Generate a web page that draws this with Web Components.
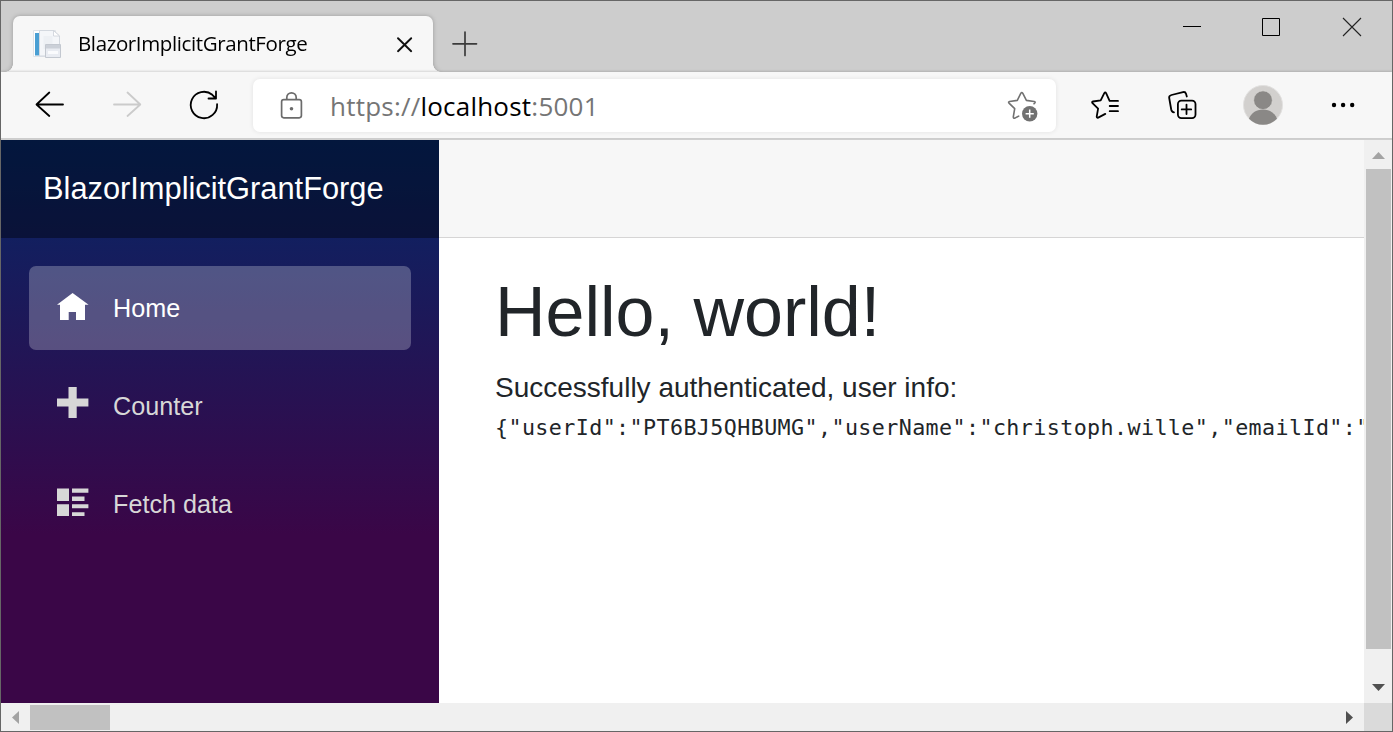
<!DOCTYPE html>
<html lang="en">
<head>
<meta charset="utf-8">
<title>BlazorImplicitGrantForge</title>
<style>
html,body{margin:0;height:100%;overflow:hidden}
body{font-family:"Liberation Sans",Arial,sans-serif}
</style>
</head>
<body>
<browser-window>
  <title-bar slot="title"><browser-tab>BlazorImplicitGrantForge</browser-tab></title-bar>
  <tool-bar slot="toolbar"><address-bar><span slot="scheme">https://</span>localhost<span slot="port">:5001</span></address-bar></tool-bar>
  <side-bar slot="page" brand="BlazorImplicitGrantForge">
    <nav-item icon="home" active>Home</nav-item>
    <nav-item icon="plus">Counter</nav-item>
    <nav-item icon="list">Fetch data</nav-item>
  </side-bar>
  <main-content slot="page">
    <span slot="heading">Hello, world!</span>
    <span slot="message">Successfully authenticated, user info:</span>
    <span slot="code">{"userId":"PT6BJ5QHBUMG","userName":"christoph.wille","emailId":"</span>
  </main-content>
</browser-window>
<script>
const define = (name, html, setup) => {
  const t = document.createElement('template');
  t.innerHTML = html;
  customElements.define(name, class extends HTMLElement {
    constructor() {
      super();
      this.attachShadow({mode: 'open'}).append(t.content.cloneNode(true));
    }
    connectedCallback() { if (setup) setup(this, this.shadowRoot); }
  });
};

// name: [viewBox, markup]
const line = 'fill="none" stroke-linecap="round" stroke-linejoin="round" stroke-width="1.8"';
const ICONS = {
  favicon: ['32 29 30 30', '<path d="M33.5 30.5h22v26h-22z" fill="#fff" stroke="#dfe3e8"/><path d="M35 33h4.6v22.500H35z" fill="#4a9fd3"/><path d="M39.500 30.500h14l6 5.500v20h-20z" fill="#f4f6f9" stroke="#d3d8df"/><path d="M53.500 30.500v5.500h6z" fill="#fff" stroke="#ccd1d8" stroke-width=".8"/><path d="M43.500 36h9v13h-9z" fill="#edf0f4"/><path d="M45.500 44.500h15v13h-15z" fill="#e9ecf2" stroke="#c3c8d0"/><path d="M46 45h14v3.500H46z" fill="#cbd0d8"/><path d="M48 51h10v3H48z" fill="#fafbfd"/>'],
  close: ['394 34 20 20', '<path d="M398 38.200l13.200 13M411.200 38.200l-13.200 13" stroke="#111" fill="none" stroke-width="1.900" stroke-linecap="round"/>'],
  add: ['452 31 26 26', '<path d="M465 32v23.500M453 43.800h23.500" stroke="#3b3b3b" fill="none" stroke-width="1.700" stroke-linecap="round"/>'],
  minimize: ['1182 17 20 20', '<path d="M1183 26.500h18" stroke="#000"/>'],
  maximize: ['1262 17 20 20', '<path d="M1262.500 18.500h17v17h-17z" fill="none" stroke="#000"/>'],
  exit: ['1342 17 20 20', '<path d="M1343 18l18 18M1361 18l-18 18" stroke="#222" stroke-width="1.100"/>'],
  back: ['34 89 32 32', `<path ${line} stroke="#000" d="M63 104.500H36.800M49.300 92.500l-12.800 12 12.800 11.500"/>`],
  forward: ['111 89 32 32', `<path ${line} stroke="#cbcbcb" d="M114 104.500h26.300M127.500 92.500l12.800 12-12.800 11.500"/>`],
  refresh: ['188 89 32 32', `<path ${line} stroke="#000" d="M217.100 104.200A13.200 13.200 0 1 1 212.300 94.800L216 98.500M216 91.500v7h-7.500"/>`],
  lock: ['276 89 32 32', '<g fill="none" stroke="#6b6b6b" stroke-width="1.700"><rect x="281.600" y="98.600" width="19.800" height="18.200" rx="2.200"/><path d="M286.800 98.500v-2a4.700 4.700 0 0 1 9.400 0v2"/></g><circle cx="291.500" cy="107.700" r="1.800" fill="#6b6b6b"/>'],
  staradd: ['1007 90 32 32', '<path fill="none" stroke="#717171" stroke-width="1.600" stroke-linejoin="round" stroke-linecap="round" d="M1034 103.800l.8-.8q.9-1.200-.7-1.500l-7.700-1.100-3.700-7.200q-.9-1.300-1.800 0l-3.600 7.200-7.700 1.100q-1.600.4-.6 1.600l5.700 5.500-1.400 8.300q0 1.600 1.600 1.200l3.800-2"/><circle cx="1029.700" cy="113.700" r="7.700" fill="#717171"/><path d="M1029.700 109.600v8.200M1025.600 113.700h8.200" stroke="#fff" stroke-width="1.500"/>'],
  favorites: ['1090 89 32 32', `<path ${line} stroke="#000" d="M1118 100.900h-8.400l-3.500-7.800q-.9-1.600-1.800 0l-3.600 7.200-7.700 1.200q-1.500.3-.5 1.600l5.600 5.500-1.400 8q0 1.500 1.500 1l7.100-3.700M1109.700 106h8.300M1109.700 111.200h8.300"/>`],
  collections: ['1167 89 32 32', `<g ${line} stroke="#000"><rect x="1177.900" y="100.600" width="17.600" height="17.500" rx="3.500"/><path d="M1186.500 104.600v9.500M1181.700 109.400h9.500M1186.800 96.500l-.8-2.700q-.7-2.300-3-1.700l-11.500 2.900q-2.800.8-2.300 3l2 11.500q.6 2.700 2.800 2.900"/></g>`],
  avatar: ['1243 85 40 40', '<circle cx="1263" cy="105" r="19.500" fill="#d2d0ce" stroke="#e2e1e0"/><circle cx="1263" cy="100.200" r="9.400" fill="#8a8886" stroke="#dddbd9" stroke-width=".7"/><path d="M1249 118.800c2-5.500 7-9.300 14-9.300s12 3.800 14 9.300a19.500 19.500 0 0 1-28 0z" fill="#8a8886"/>'],
  more: ['1327 89 32 32', '<g fill="#000"><circle cx="1334" cy="105" r="2.200"/><circle cx="1343.100" cy="105" r="2.200"/><circle cx="1352.200" cy="105" r="2.200"/></g>'],
  home: ['57 290 32 32', '<path d="M72.600 293l16 11.700H85V320h-9v-8h-7.300v8H60v-15.300h-3z" fill="currentColor"/>'],
  plus: ['57 388 32 32', '<path d="M68.500 387h8.200v11.400h11.700v8H76.700V418h-8.200v-11.600H57v-8h11.500z" fill="currentColor"/>'],
  list: ['57 486 32 32', '<path d="M57 488.500h12V501H57zM57 504.300h12V516H57zM72 488.500h16.400v4.300H72zM72 496.600h12.500v4.400H72zM72 504.300h16.400v4H72zM72 512.300h12.500v3.700H72z" fill="currentColor"/>'],
  up: ['1364 140 28 28', '<path d="M1372 159h13l-6.500-7z" fill="#a3a3a3"/>'],
  down: ['1364 675 28 28', '<path d="M1372 684h13l-6.500 7z" fill="#505050"/>'],
  left: ['1 703 28 28', '<path d="M19 711v13l-7-6.500z" fill="#a3a3a3"/>'],
  right: ['1336 703 28 28', '<path d="M1346 711v13l7-6.500z" fill="#505050"/>']
};

define('ui-icon', '<style>:host{display:block;flex:none}svg{display:block;overflow:visible}</style><div></div>', (el, root) => {
  const [box, art] = ICONS[el.getAttribute('name')];
  const [, , w, h] = box.split(' ');
  root.querySelector('div').innerHTML = `<svg width="${w}" height="${h}" viewBox="${box}">${art}</svg>`;
});

define('browser-window', `<style>
:host{display:flex;flex-direction:column;box-sizing:border-box;width:1393px;height:732px;border:1px solid #666;background:#fff;overflow:hidden}
.view{flex:1;min-height:0;display:grid;grid-template-columns:1fr 28px;grid-template-rows:1fr 28px;border-top:2px solid #cfcfcf}
.page{display:flex;min-width:0;overflow:hidden}
.corner{background:#dadada}
</style>
<slot name="title"></slot><slot name="toolbar"></slot>
<div class="view"><div class="page"><slot name="page"></slot></div><scroll-track></scroll-track>
<scroll-track horizontal></scroll-track><div class="corner"></div></div>`);

define('title-bar', `<style>
:host{display:flex;height:71px;background:#cdcdcd;padding-left:12px}
.add{padding:30px 0 0 19px}
.controls{display:flex;margin-left:auto;height:52px}
.controls div{width:80px;display:grid;place-items:center}
</style>
<slot></slot><ui-icon class="add" name="add"></ui-icon>
<div class="controls"><div><ui-icon name="minimize"></ui-icon></div><div><ui-icon name="maximize"></ui-icon></div><div><ui-icon name="exit"></ui-icon></div></div>`);

define('browser-tab', `<style>
:host{display:flex;align-items:center;box-sizing:border-box;position:relative;z-index:0;width:420px;height:56px;margin-top:15px;padding:0 19px 0 19px;background:#f7f7f7;border-radius:7px 7px 0 0;filter:drop-shadow(0 0 2px rgba(0,0,0,.25));font:20.5px "Open Sans","Noto Sans",sans-serif;color:#000}
:host::before,:host::after{content:"";position:absolute;bottom:0;width:8px;height:8px}
:host::before{left:-8px;background:radial-gradient(circle at 0 0,transparent 7.5px,#f7f7f7 8px)}
:host::after{right:-8px;background:radial-gradient(circle at 100% 0,transparent 7.5px,#f7f7f7 8px)}
.label{flex:1;padding:0 0 2px 16px;white-space:nowrap;letter-spacing:-.38px}
</style>
<ui-icon name="favicon"></ui-icon><span class="label"><slot></slot></span><ui-icon name="close"></ui-icon>`);

define('tool-bar', `<style>
:host{display:flex;align-items:center;height:66px;padding-left:33px;background:#f7f7f7;position:relative;box-shadow:0 -1px 2px rgba(0,0,0,.14)}
.nav{display:flex;gap:45px;width:219px}
.actions{display:flex;align-items:center;gap:44px;margin-left:34px}
.actions :first-child{margin-right:1px}
</style>
<div class="nav"><ui-icon name="back"></ui-icon><ui-icon name="forward"></ui-icon><ui-icon name="refresh"></ui-icon></div>
<slot></slot>
<div class="actions"><ui-icon name="favorites"></ui-icon><ui-icon name="collections"></ui-icon><ui-icon name="avatar"></ui-icon><ui-icon name="more"></ui-icon></div>`);

define('address-bar', `<style>
:host{display:flex;align-items:center;box-sizing:border-box;width:803px;height:53px;margin-top:1px;padding:0 17px 0 23px;background:#fff;border-radius:7px;box-shadow:0 0 5px rgba(0,0,0,.09);font:26px "Open Sans","Noto Sans",sans-serif;color:#000}
.url{flex:1;padding-left:22px;white-space:nowrap;letter-spacing:.22px}
::slotted(span){color:#757575}
</style>
<ui-icon name="lock"></ui-icon><span class="url"><slot name="scheme"></slot><slot></slot><slot name="port"></slot></span><ui-icon name="staradd"></ui-icon>`);

define('side-bar', `<style>
:host{display:block;flex:none;width:438px;background:linear-gradient(180deg,#052767 0%,#3a0647 70%)}
.brand{display:flex;align-items:center;box-sizing:border-box;height:98px;padding-left:42px;background:rgba(0,0,0,.4);color:#fff;font-size:30.8px;white-space:nowrap}
nav{display:flex;flex-direction:column;gap:14px;padding:28px}
</style>
<div class="brand"></div><nav><slot></slot></nav>`, (el, root) => {
  root.querySelector('.brand').textContent = el.getAttribute('brand');
});

define('nav-item', `<style>
:host{display:flex;align-items:center;box-sizing:border-box;height:84px;padding-left:28px;gap:24px;border-radius:7px;color:#d7d7d7;font-size:25.2px}
:host([active]){background:rgba(255,255,255,.25);color:#fff}
ui-icon{margin-top:-4px}
</style><slot></slot>`, (el, root) => {
  const icon = document.createElement('ui-icon');
  icon.setAttribute('name', el.getAttribute('icon'));
  root.querySelector('slot').before(icon);
});

define('main-content', `<style>
:host{display:block;flex:1;min-width:0;background:#fff;color:#212529;overflow:hidden}
.top{box-sizing:border-box;height:98px;background:#f7f7f7;border-bottom:1px solid #d6d5d5}
.body{padding:32px 0 0 56px;white-space:nowrap}
h1{margin:0 0 13px;font-size:70px;font-weight:400;line-height:84px}
p{margin:0;font-size:28px;line-height:42px}
code{display:block;font:21.7px/37px "DejaVu Sans Mono",monospace;letter-spacing:.4px}
</style>
<div class="top"></div><div class="body"><h1><slot name="heading"></slot></h1><p><slot name="message"></slot></p><code><slot name="code"></slot></code></div>`);

define('scroll-track', `<style>
:host{display:flex;flex-direction:column;align-items:center;background:#f0f0f0}
:host([horizontal]){flex-direction:row}
.thumb{background:#c1c1c1;width:25px;height:480px;margin:1px 0 auto 1px}
:host([horizontal]) .thumb{width:80px;height:25px;margin:1px auto 0 1px}
</style><div class="thumb"></div>`, (el, root) => {
  const [first, last] = (el.hasAttribute('horizontal') ? ['left', 'right'] : ['up', 'down']).map(name => {
    const icon = document.createElement('ui-icon');
    icon.setAttribute('name', name);
    return icon;
  });
  const thumb = root.querySelector('.thumb');
  thumb.before(first);
  thumb.after(last);
});
</script>
</body>
</html>
